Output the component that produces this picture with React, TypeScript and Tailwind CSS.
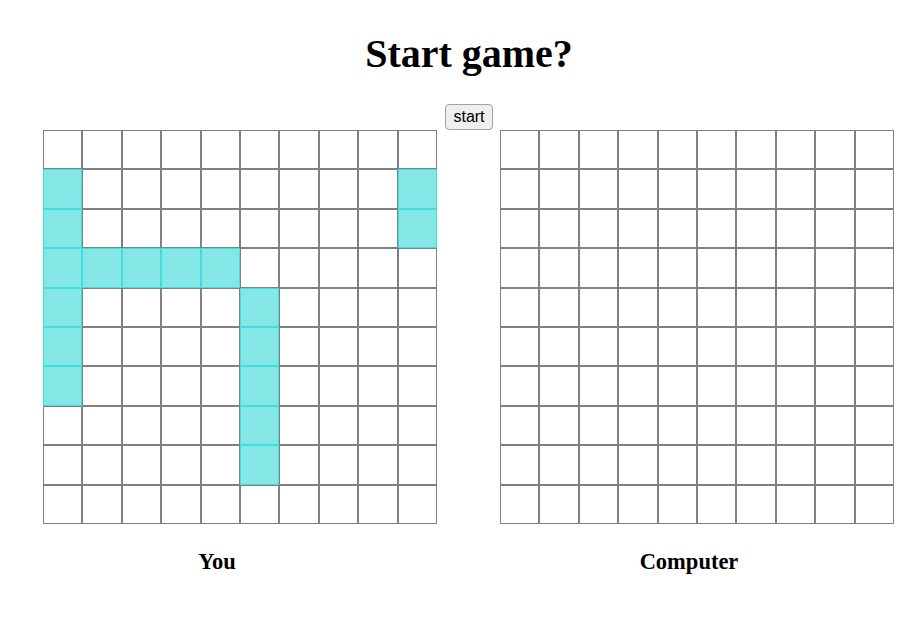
const SHIPS = new Set<string>([
  '1-0', '2-0', '3-0', '4-0', '5-0', '6-0',
  '3-1', '3-2', '3-3', '3-4',
  '1-9', '2-9',
  '4-5', '5-5', '6-5', '7-5', '8-5',
]);

function Board({ ships }: { ships?: Set<string> }) {
  const cells = [];
  for (let r = 0; r < 10; r++) {
    for (let c = 0; c < 10; c++) {
      const taken = ships?.has(`${r}-${c}`);
      cells.push(
        <div
          key={`${r}-${c}`}
          className={
            taken
              ? 'h-[39.4px] border border-[#3fdfe0] bg-[#85e7e5]'
              : 'h-[39.4px] border border-[#808080] bg-white'
          }
        />
      );
    }
  }
  return <div className="grid w-[394px] shrink-0 grid-cols-10">{cells}</div>;
}

export default function App() {
  return (
    <div className="min-h-[617px] w-[920px] bg-white font-['Liberation_Serif',serif] text-black">
      <h1 className="pl-[18px] pt-[31px] text-center text-[40px] font-bold leading-[46px]">Start game?</h1>

      <div className="mt-[27px] flex justify-center pl-[18px]">
        <button className="h-[26px] rounded-[4px] border border-[#a0a0a6] bg-[#efefef] px-[7px] font-['Liberation_Sans',sans-serif] text-[16px] leading-none">
          start
        </button>
      </div>

      <div className="flex gap-[63px] pl-[43px]">
        <Board ships={SHIPS} />
        <Board />
      </div>

      <div className="mt-[25px] grid grid-cols-[434px_1fr] text-[22.5px] font-bold leading-[26px]">
        <div className="text-center">You</div>
        <div className="pl-[24px] text-center">Computer</div>
      </div>
    </div>
  );
}
